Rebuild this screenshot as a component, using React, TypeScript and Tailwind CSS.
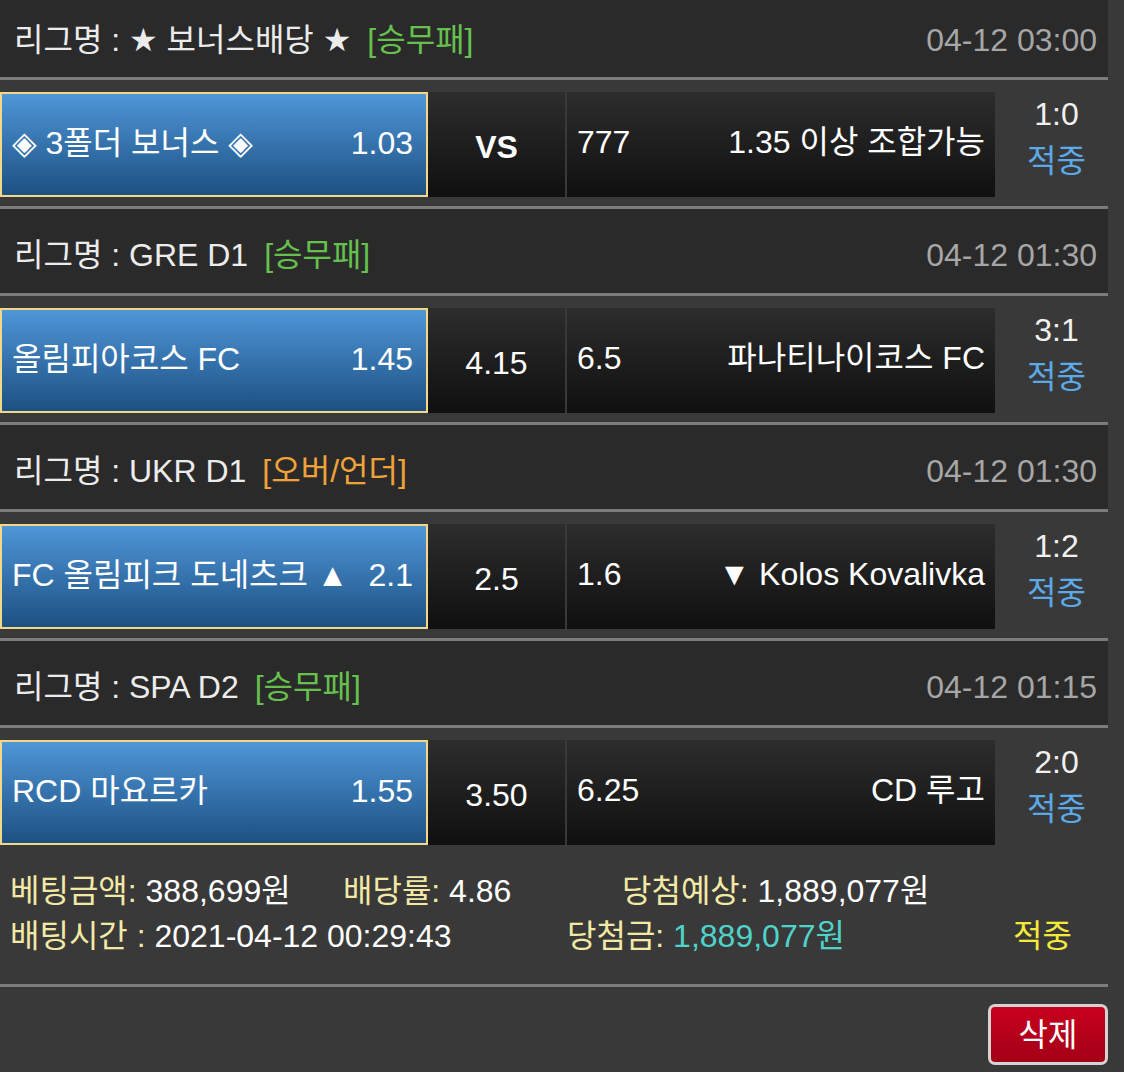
import React from "react";

// one bet slip line: league header + match row
interface Match {
  league: string;
  market: string;
  marketColor: string;
  date: string;
  home: string;
  homeOdds: string;
  mid: string;
  midBold?: boolean;
  awayOdds: string;
  away: string;
  score: string;
}

const matches: Match[] = [
  {
    league: "★ 보너스배당 ★",
    market: "[승무패]",
    marketColor: "text-[#66c04e]",
    date: "04-12 03:00",
    home: "◈ 3폴더 보너스 ◈",
    homeOdds: "1.03",
    mid: "VS",
    midBold: true,
    awayOdds: "777",
    away: "1.35 이상 조합가능",
    score: "1:0",
  },
  {
    league: "GRE D1",
    market: "[승무패]",
    marketColor: "text-[#66c04e]",
    date: "04-12 01:30",
    home: "올림피아코스 FC",
    homeOdds: "1.45",
    mid: "4.15",
    awayOdds: "6.5",
    away: "파나티나이코스 FC",
    score: "3:1",
  },
  {
    league: "UKR D1",
    market: "[오버/언더]",
    marketColor: "text-[#f0a23a]",
    date: "04-12 01:30",
    home: "FC 올림피크 도네츠크 ▲",
    homeOdds: "2.1",
    mid: "2.5",
    awayOdds: "1.6",
    away: "▼ Kolos Kovalivka",
    score: "1:2",
  },
  {
    league: "SPA D2",
    market: "[승무패]",
    marketColor: "text-[#66c04e]",
    date: "04-12 01:15",
    home: "RCD 마요르카",
    homeOdds: "1.55",
    mid: "3.50",
    awayOdds: "6.25",
    away: "CD 루고",
    score: "2:0",
  },
];

// latin from Liberation Sans, symbols from DejaVu, hangul from Noto CJK
const font = { fontFamily: '"Liberation Sans", "DejaVu Sans", "Noto Sans CJK KR", sans-serif' };

function MatchBlock({ m, first, last }: { m: Match; first: boolean; last: boolean }) {
  return (
    <div>
      {/* league header */}
      <div
        className={`flex items-center justify-between bg-[#2a2a2a] pl-[14px] pr-[11px] ${
          first ? "h-[77px] pt-[3px]" : "h-[84px] pt-[8px]"
        }`}
      >
        <div className="text-[#ececec] whitespace-pre">
          리그명 : {m.league}
          <span className={`ml-[16px] ${m.marketColor}`}>{m.market}</span>
        </div>
        <div className="text-[#a6a6a6]">{m.date}</div>
      </div>
      <div className="h-[3px] bg-[#7c7c7c]"></div>

      {/* match row */}
      <div className="flex h-[126px] pt-[12px] pb-[9px] bg-[#393939]">
        <div className="w-[428px] h-full flex items-center justify-between border-2 border-[#f3d88c] bg-gradient-to-b from-[#4f96d8] to-[#1d5183] pl-[10px] pr-[13px] pb-[4px] text-white">
          <span className="whitespace-pre">{m.home}</span>
          <span>{m.homeOdds}</span>
        </div>
        <div
          className={`w-[137px] h-full flex items-center justify-center pt-[4px] bg-gradient-to-b from-[#2d2d2d] to-[#101010] text-white ${
            m.midBold ? "font-bold" : ""
          }`}
        >
          {m.mid}
        </div>
        <div className="w-[2px]"></div>
        <div className="w-[428px] h-full flex items-center justify-between bg-gradient-to-b from-[#2d2d2d] to-[#101010] px-[10px] pb-[5px] text-white">
          <span>{m.awayOdds}</span>
          <span className="whitespace-pre">{m.away}</span>
        </div>
        <div className="w-[113px] h-full flex flex-col items-center justify-center pl-[10px] pb-[14px] leading-[47px]">
          <span className="text-[#f0f0f0]">{m.score}</span>
          <span className="text-[#5ba9e6]">적중</span>
        </div>
      </div>
      {!last && <div className="h-[3px] bg-[#7c7c7c]"></div>}
    </div>
  );
}

export default function App() {
  return (
    <div className="w-[1124px] h-[1072px] bg-[#393939] overflow-hidden text-[32px]" style={font}>
      <div className="w-[1108px]">
        {matches.map((m, i) => (
          <MatchBlock key={i} m={m} first={i === 0} last={i === matches.length - 1} />
        ))}

        {/* summary */}
        <div className="pt-[15px] pb-[25px] leading-[45px]">
          <div className="flex">
            <div className="w-[343px] pl-[10px]">
              <span className="text-[#f3e9a6]">베팅금액:</span>
              <span className="text-white"> 388,699원</span>
            </div>
            <div className="w-[279px]">
              <span className="text-[#f3e9a6]">배당률:</span>
              <span className="text-white"> 4.86</span>
            </div>
            <div>
              <span className="text-[#f3e9a6]">당첨예상:</span>
              <span className="text-white"> 1,889,077원</span>
            </div>
          </div>
          <div className="flex">
            <div className="w-[567px] pl-[10px]">
              <span className="text-[#f3e9a6]">배팅시간 :</span>
              <span className="text-white"> 2021-04-12 00:29:43</span>
            </div>
            <div className="w-[446px]">
              <span className="text-[#f3e9a6]">당첨금:</span>
              <span className="text-[#4fd3c9]"> 1,889,077원</span>
            </div>
            <div className="text-[#f5ea3a]">적중</div>
          </div>
        </div>
        <div className="h-[3px] bg-[#7c7c7c]"></div>

        {/* actions */}
        <div className="flex justify-end pt-[17px]">
          <button className="w-[120px] h-[61px] rounded-[7px] border-[3px] border-[#d4d4d4] bg-gradient-to-b from-[#c8001e] to-[#a30016] text-white text-[32px] flex items-center justify-center">
            삭제
          </button>
        </div>
      </div>
    </div>
  );
}
